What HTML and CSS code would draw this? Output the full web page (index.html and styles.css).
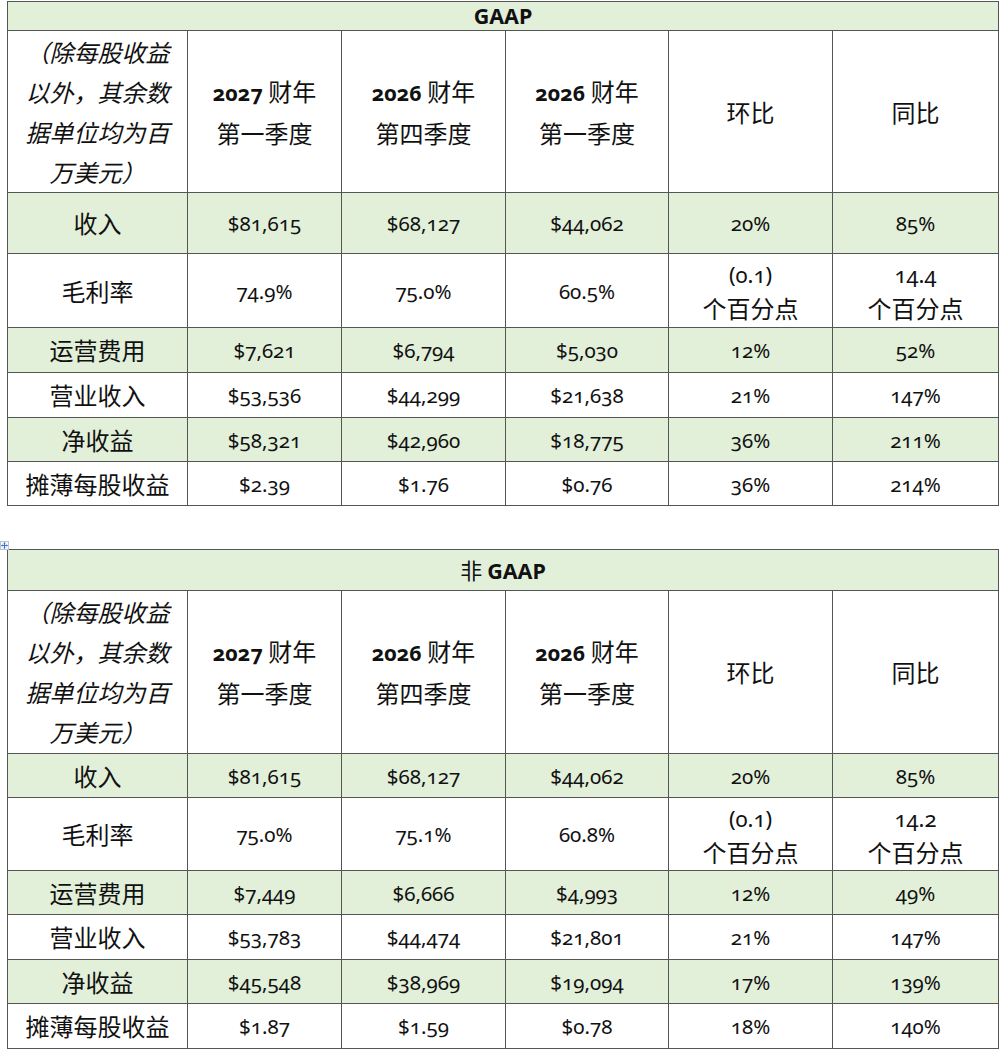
FILE: index.html
```html
<!DOCTYPE html>
<html lang="zh-CN">
<head>
<meta charset="utf-8">
<title>GAAP / 非 GAAP</title>
<link rel="stylesheet" href="styles.css">
</head>
<body>
<div class="sheet">
  <table class="fin fin-gaap">
    <colgroup>
      <col class="c-label"><col class="c-a"><col class="c-b"><col class="c-c"><col class="c-d"><col class="c-e">
    </colgroup>
    <tr class="r-title"><td colspan="6" class="green title">GAAP</td></tr>
    <tr class="r-head">
      <td class="note">（除每股收益<br>以外，其余数<br>据单位均为百<br>万美元）</td>
      <td class="hd"><b class="num">2027</b> 财年<br>第一季度</td>
      <td class="hd"><b class="num">2026</b> 财年<br>第四季度</td>
      <td class="hd"><b class="num">2026</b> 财年<br>第一季度</td>
      <td class="hd">环比</td>
      <td class="hd">同比</td>
    </tr>
    <tr class="r-rev green">
      <td class="lbl">收入</td><td class="num">$81,615</td><td class="num">$68,127</td><td class="num">$44,062</td><td class="num">20%</td><td class="num">85%</td>
    </tr>
    <tr class="r-gm">
      <td class="lbl">毛利率</td><td class="num">74.9%</td><td class="num">75.0%</td><td class="num">60.5%</td>
      <td class="pp"><span class="num">(0.1)</span><br><span class="cjk">个百分点</span></td>
      <td class="pp"><span class="num">14.4</span><br><span class="cjk">个百分点</span></td>
    </tr>
    <tr class="r-std r-tall green">
      <td class="lbl">运营费用</td><td class="num">$7,621</td><td class="num">$6,794</td><td class="num">$5,030</td><td class="num">12%</td><td class="num">52%</td>
    </tr>
    <tr class="r-std r-tall">
      <td class="lbl">营业收入</td><td class="num">$53,536</td><td class="num">$44,299</td><td class="num">$21,638</td><td class="num">21%</td><td class="num">147%</td>
    </tr>
    <tr class="r-std green">
      <td class="lbl">净收益</td><td class="num">$58,321</td><td class="num">$42,960</td><td class="num">$18,775</td><td class="num">36%</td><td class="num">211%</td>
    </tr>
    <tr class="r-std">
      <td class="lbl">摊薄每股收益</td><td class="num">$2.39</td><td class="num">$1.76</td><td class="num">$0.76</td><td class="num">36%</td><td class="num">214%</td>
    </tr>
  </table>

  <div class="table-wrap">
    <span class="move-handle" aria-hidden="true">
      <svg viewBox="0 0 9 9" width="9" height="9">
        <rect x="0.5" y="0.5" width="8" height="8" fill="#f4f6fa" stroke="#b9c3d3"/>
        <path d="M4.5 1.5v6M1.5 4.5h6" stroke="#3b6fd0" stroke-width="1"/>
        <path d="M4.5 1.2l-1.2 1.3h2.4zM4.5 7.8l-1.2-1.3h2.4zM1.2 4.5l1.3-1.2v2.4zM7.8 4.5l-1.3-1.2v2.4z" fill="#3b6fd0"/>
      </svg>
    </span>
    <table class="fin fin-non">
      <colgroup>
        <col class="c-label"><col class="c-a"><col class="c-b"><col class="c-c"><col class="c-d"><col class="c-e">
      </colgroup>
      <tr class="r-title"><td colspan="6" class="green title">非 <span class="latin">GAAP</span></td></tr>
      <tr class="r-head">
        <td class="note">（除每股收益<br>以外，其余数<br>据单位均为百<br>万美元）</td>
        <td class="hd"><b class="num">2027</b> 财年<br>第一季度</td>
        <td class="hd"><b class="num">2026</b> 财年<br>第四季度</td>
        <td class="hd"><b class="num">2026</b> 财年<br>第一季度</td>
        <td class="hd">环比</td>
        <td class="hd">同比</td>
      </tr>
      <tr class="r-rev green">
        <td class="lbl">收入</td><td class="num">$81,615</td><td class="num">$68,127</td><td class="num">$44,062</td><td class="num">20%</td><td class="num">85%</td>
      </tr>
      <tr class="r-gm">
        <td class="lbl">毛利率</td><td class="num">75.0%</td><td class="num">75.1%</td><td class="num">60.8%</td>
        <td class="pp"><span class="num">(0.1)</span><br><span class="cjk">个百分点</span></td>
        <td class="pp"><span class="num">14.2</span><br><span class="cjk">个百分点</span></td>
      </tr>
      <tr class="r-std green">
        <td class="lbl">运营费用</td><td class="num">$7,449</td><td class="num">$6,666</td><td class="num">$4,993</td><td class="num">12%</td><td class="num">49%</td>
      </tr>
      <tr class="r-std r-tall">
        <td class="lbl">营业收入</td><td class="num">$53,783</td><td class="num">$44,474</td><td class="num">$21,801</td><td class="num">21%</td><td class="num">147%</td>
      </tr>
      <tr class="r-std green">
        <td class="lbl">净收益</td><td class="num">$45,548</td><td class="num">$38,969</td><td class="num">$19,094</td><td class="num">17%</td><td class="num">139%</td>
      </tr>
      <tr class="r-std r-tall">
        <td class="lbl">摊薄每股收益</td><td class="num">$1.87</td><td class="num">$1.59</td><td class="num">$0.78</td><td class="num">18%</td><td class="num">140%</td>
      </tr>
    </table>
  </div>
</div>
</body>
</html>
```

FILE: styles.css
```css
html, body {
  margin: 0;
  padding: 0;
  background: #ffffff;
}

body {
  font-family: "Noto Sans CJK SC", "Noto Sans", sans-serif;
  color: #111111;
  text-spacing-trim: space-all;
}

.sheet {
  padding: 1px 0 0 7px;
  width: 991px;
}

.table-wrap {
  position: relative;
  margin-top: 43px;
}

.move-handle {
  position: absolute;
  left: -7px;
  top: -8px;
  width: 9px;
  height: 9px;
  line-height: 0;
}

.fin {
  border-collapse: collapse;
  table-layout: fixed;
  width: 991px;
  border: 1px solid #555555;
}

.fin td {
  border: 1px solid #555555;
  padding: 0 4px;
  text-align: center;
  vertical-align: middle;
  font-size: 24px;
  line-height: 30px;
}

.c-label { width: 180px; }
.c-a { width: 154px; }
.c-b { width: 164px; }
.c-c { width: 163px; }
.c-d { width: 164px; }
.c-e { width: 166px; }

.fin .green td,
.fin td.green {
  background: #e2efd9;
}

.fin td.title {
  font-family: "Noto Sans", "Noto Sans CJK SC", sans-serif;
  font-weight: 700;
  font-size: 21.5px;
  line-height: 26px;
}

.fin-non td.title {
  font-family: "Noto Sans CJK SC", sans-serif;
  font-weight: 400;
  font-size: 22px;
}

.fin-non td.title .latin {
  font-family: "Noto Sans", sans-serif;
  font-weight: 700;
  font-size: 21.5px;
}

.fin td.note {
  font-style: italic;
  line-height: 40px;
}

.fin td.hd {
  line-height: 40px;
}

.fin .num {
  font-family: "Noto Sans", "Liberation Sans", sans-serif;
  font-variant-numeric: oldstyle-nums;
  font-feature-settings: "onum" 1;
  font-size: 20.5px;
}

.fin .hd .num {
  font-size: 21.5px;
}

.fin td.pp {
  line-height: 34px;
}

.fin .pp .num {
  font-size: 22px;
}

.fin .cjk {
  font-size: 24px;
}

.fin-gaap .r-title { height: 29px; }
.fin-gaap .r-head { height: 162px; }
.fin-gaap .r-rev { height: 61px; }
.fin-gaap .r-gm { height: 74px; }
.fin-gaap .r-std { height: 44px; }
.fin-gaap .r-tall { height: 45px; }

.fin-non .r-title { height: 41px; }
.fin-non .r-head { height: 163px; }
.fin-non .r-rev { height: 44px; }
.fin-non .r-gm { height: 73px; }
.fin-non .r-std { height: 44px; }
.fin-non .r-tall { height: 45px; }
```
